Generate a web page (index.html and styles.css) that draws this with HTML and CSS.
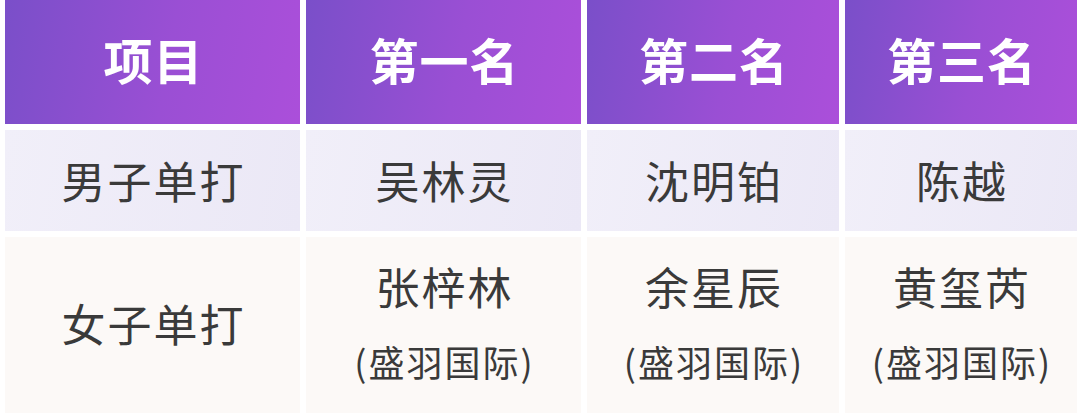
FILE: index.html
```html
<!DOCTYPE html>
<html lang="zh">
<head>
<meta charset="utf-8">
<link rel="stylesheet" href="styles.css">
</head>
<body>
<div class="table">
  <div class="cell head">项目</div>
  <div class="cell head">第一名</div>
  <div class="cell head">第二名</div>
  <div class="cell head">第三名</div>

  <div class="cell r1">男子单打</div>
  <div class="cell r1">吴林灵</div>
  <div class="cell r1">沈明铂</div>
  <div class="cell r1">陈越</div>

  <div class="cell r2">女子单打</div>
  <div class="cell r2 stack"><span class="name">张梓林</span><span class="club">(盛羽国际)</span></div>
  <div class="cell r2 stack"><span class="name">余星辰</span><span class="club">(盛羽国际)</span></div>
  <div class="cell r2 stack"><span class="name">黄玺芮</span><span class="club">(盛羽国际)</span></div>
</div>
</body>
</html>
```
FILE: styles.css
```css
html, body {
  margin: 0;
  padding: 0;
  background: #ffffff;
}
body {
  font-family: "Noto Sans CJK SC", "Noto Sans", sans-serif;
  width: 1080px;
  height: 419px;
  overflow: hidden;
}
.table {
  display: grid;
  grid-template-columns: 295px 275px 252px 232px;
  grid-template-rows: 124px 101px 176px;
  column-gap: 6px;
  row-gap: 6px;
  padding-left: 5px;
}
.cell {
  display: flex;
  align-items: center;
  justify-content: center;
  color: #3a3a3a;
  font-size: 44px;
  line-height: 50px;
  letter-spacing: 2px;
  text-indent: 2px;
}
.head {
  background: linear-gradient(100deg, #7a4fc9 0%, #9a4fd4 55%, #ab4fda 100%);
  color: #ffffff;
  font-weight: 700;
  font-size: 49px;
  letter-spacing: 1px;
  padding-bottom: 6px;
}
.r1 {
  background: linear-gradient(100deg, #f1eff9 0%, #ebe8f6 100%);
  padding-bottom: 2px;
}
.r2 {
  background: #fcf9f7;
  padding-bottom: 4px;
}
.stack {
  flex-direction: column;
  padding-bottom: 8px;
}
.name {
  line-height: 50px;
}
.club {
  font-size: 36px;
  letter-spacing: 2px;
  line-height: 40px;
  margin-top: 30px;
}
```
